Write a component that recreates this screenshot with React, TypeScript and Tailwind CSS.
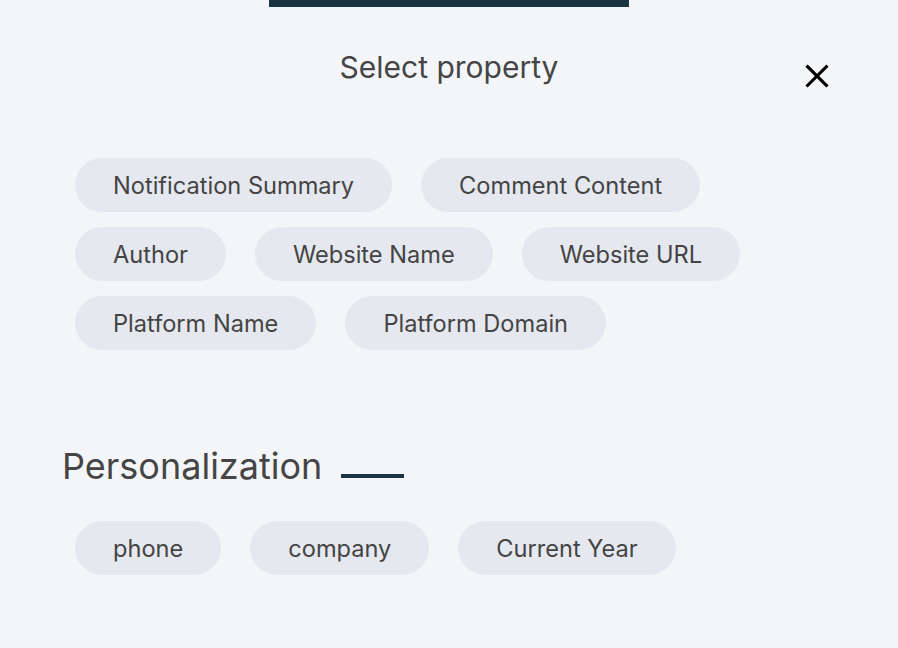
const props = ["Notification Summary", "Comment Content", "Author", "Website Name", "Website URL", "Platform Name", "Platform Domain"];
const personal = ["phone", "company", "Current Year"];

const Chip = ({ label }: { label: string }) => (
  <button className="h-[54px] px-[38px] pt-[2px] rounded-full bg-[#e6e8ef] text-[23.6px] text-[#444] leading-none">
    {label}
  </button>
);

export default function App() {
  return (
    <div className="min-h-[648px] w-[898px] bg-[#f4f5f9] font-['Inter',sans-serif] text-[#454545]">
      <div className="flex justify-center">
        <div className="h-[7px] w-[360px] bg-[#1b3442]" />
      </div>
      <div className="relative flex justify-center pt-[42px]">
        <h1 className="text-[30px] leading-[36px]">Select property</h1>
        <button className="absolute right-[66px] top-[54px] text-black">
          <svg width="30" height="30" viewBox="0 0 24 24" fill="none" stroke="currentColor" strokeWidth="2.5" strokeLinecap="square">
            <path d="M4.5 4.5l15 15M19.5 4.5l-15 15" />
          </svg>
        </button>
      </div>
      <div className="mt-[73px] pl-[75px] pr-[100px] flex flex-wrap gap-x-[29px] gap-y-[15px]">
        {props.map((p) => (
          <Chip key={p} label={p} />
        ))}
      </div>
      <div className="mt-[94px] pl-[62px] flex items-end gap-[19px]">
        <h2 className="text-[36px] leading-[44px]">Personalization</h2>
        <div className="h-[4px] w-[63px] bg-[#1b3442] mb-[10px]" />
      </div>
      <div className="mt-[33px] pl-[75px] flex flex-wrap gap-x-[29px]">
        {personal.map((p) => (
          <Chip key={p} label={p} />
        ))}
      </div>
    </div>
  );
}
